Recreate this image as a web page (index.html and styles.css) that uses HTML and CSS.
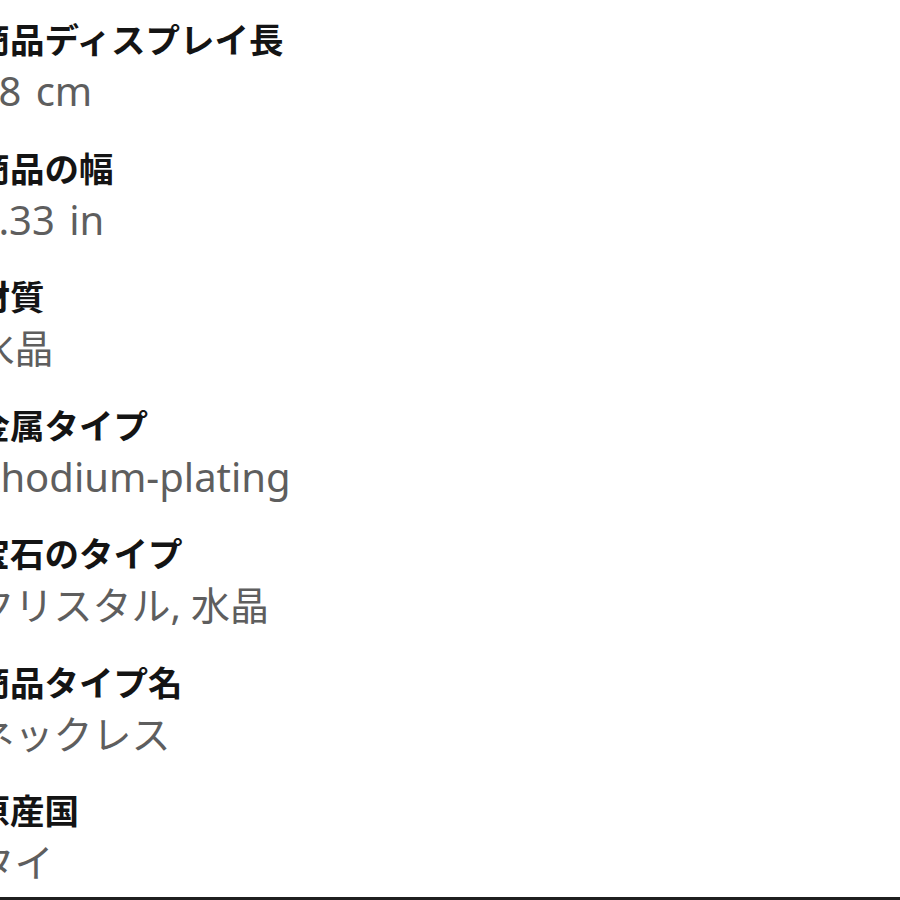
FILE: index.html
```
<!DOCTYPE html>
<html lang="ja">
<head>
<meta charset="utf-8">
<link rel="stylesheet" href="styles.css">
</head>
<body>
<div class="page">
  <dl class="specs">
    <div class="spec"><dt>商品ディスプレイ長</dt><dd class="latin">58 cm</dd></div>
    <div class="spec"><dt>商品の幅</dt><dd class="latin">1.33 in</dd></div>
    <div class="spec"><dt>材質</dt><dd>水晶</dd></div>
    <div class="spec"><dt>金属タイプ</dt><dd class="latin">Rhodium-plating</dd></div>
    <div class="spec"><dt>宝石のタイプ</dt><dd>クリスタル, 水晶</dd></div>
    <div class="spec"><dt>商品タイプ名</dt><dd>ネックレス</dd></div>
    <div class="spec"><dt>原産国</dt><dd>タイ</dd></div>
  </dl>
</div>
</body>
</html>
```
FILE: styles.css
```
html, body {
  margin: 0;
  padding: 0;
  background: #ffffff;
}
body {
  width: 900px;
  height: 900px;
  overflow: hidden;
  font-family: "Noto Sans", "Noto Sans CJK JP", sans-serif;
}
.page {
  height: 900px;
  box-sizing: border-box;
  border-bottom: 3px solid #1f1f1f;
  overflow: hidden;
}
.specs {
  margin: 0 0 0 -24.5px;
  padding: 16px 0 0 0;
  display: flex;
  flex-direction: column;
}
.spec {
  height: 128.5px;
}
.spec dt {
  font-family: "Noto Sans CJK JP", sans-serif;
  font-size: 34.5px;
  font-weight: 700;
  line-height: 44px;
  color: #141414;
}
.spec dd {
  margin: 6px 0 0 0;
  font-size: 39px;
  line-height: 50px;
  color: #5e5e5e;
}
.spec dd.latin {
  font-size: 40px;
  word-spacing: 4px;
}
```
